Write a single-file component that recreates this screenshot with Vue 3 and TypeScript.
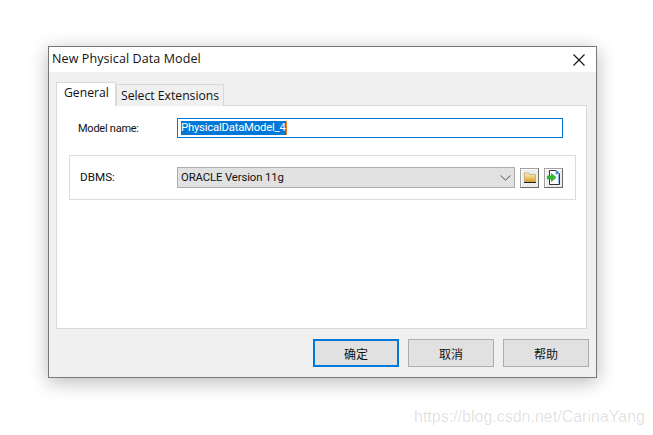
<script setup lang="ts">
const modelName = "PhysicalDataModel_4";
const buttons = ["确定", "取消", "帮助"];
</script>

<template>
  <div class="page">
    <div class="dialog">
      <header class="titlebar">
        <span class="title">New Physical Data Model</span>
        <svg class="close" width="12" height="12" viewBox="0 0 12 12">
          <path d="M0.5 0.5L11.5 11.5M11.5 0.5L0.5 11.5" stroke="#111" stroke-width="1.1" fill="none" />
        </svg>
      </header>
      <div class="body">
        <div class="tabs">
          <div class="tab active">General</div>
          <div class="tab">Select Extensions</div>
        </div>
        <div class="panel">
          <div class="name-row">
            <span class="name-label">Model name:</span>
            <div class="input"><span class="selected">{{ modelName }}</span></div>
          </div>
          <div class="group">
            <span class="dbms-label">DBMS:</span>
            <div class="select">
              <span>ORACLE Version 11g</span>
              <svg width="11" height="6" viewBox="0 0 11 6">
                <path d="M0.5 0.5L5.5 5L10.5 0.5" stroke="#555" stroke-width="1" fill="none" />
              </svg>
            </div>
            <button class="icon-btn">
              <svg width="12" height="11" viewBox="0 0 12 11">
                <defs>
                  <linearGradient id="fold" x1="0" y1="0" x2="0" y2="1">
                    <stop offset="0" stop-color="#fff3c4" />
                    <stop offset="1" stop-color="#d99f22" />
                  </linearGradient>
                </defs>
                <path d="M0.5 10V1H4.5L5.5 2.5H11.5V10Z" fill="url(#fold)" stroke="#b9a877" stroke-width="0.8" />
                <path d="M0 10.5H12" stroke="#222" stroke-width="1" />
              </svg>
            </button>
            <button class="icon-btn">
              <svg width="13" height="15" viewBox="0 0 13 15">
                <path d="M2.5 0.5H9L12.5 4V14.5H2.5Z" fill="#fff" stroke="#333" />
                <path d="M9 0.5V4H12.5Z" fill="#5f9fe8" stroke="#3b78c8" stroke-width="0.7" />
                <path d="M11.5 5V13.5" stroke="#8db8ea" />
                <path d="M0.5 6H4.5V3.5L9 7.5L4.5 11.5V9H0.5Z" fill="#2fbf2f" stroke="#1d8a1d" stroke-width="0.6" />
              </svg>
            </button>
          </div>
        </div>
        <div class="actions">
          <button
            v-for="(label, i) in buttons"
            :key="label"
            class="action"
            :class="{ primary: i === 0 }"
          >{{ label }}</button>
        </div>
      </div>
    </div>
    <span class="watermark">https://blog.csdn.net/CarinaYang</span>
  </div>
</template>

<style>
html, body { margin: 0; background: #fff; }
</style>

<style scoped>
.page {
  position: relative;
  width: 653px;
  height: 435px;
  overflow: hidden;
  padding: 46px 0 0 48px;
  box-sizing: border-box;
  background: #fff;
  font-family: "Liberation Sans", Arial, "Noto Sans CJK SC", sans-serif;
  color: #111;
}
.dialog {
  width: 549px;
  height: 332px;
  box-sizing: border-box;
  border: 1px solid #777;
  display: flex;
  flex-direction: column;
  box-shadow: 0 4px 18px rgba(0, 0, 0, 0.28);
}
.titlebar {
  height: 25px;
  flex: none;
  background: #fff;
  display: flex;
  align-items: center;
  justify-content: space-between;
  padding: 0 11px 2px 3px;
  box-sizing: border-box;
}
.title { font-family: "Open Sans", "Liberation Sans", sans-serif; font-size: 12.5px; letter-spacing: 0.1px; }
.close { flex: none; margin-top: 2px; }
.body {
  flex: 1;
  background: #f0f0f0;
  padding: 11px 9px 10px 7px;
  display: flex;
  flex-direction: column;
}
.tabs {
  display: flex;
  align-items: flex-end;
  height: 23px;
  flex: none;
  position: relative;
  z-index: 1;
  margin-bottom: -1px;
}
.tab {
  height: 22px;
  box-sizing: border-box;
  padding: 0 4px;
  width: 108px;
  border: 1px solid #d9d9d9;
  border-bottom: none;
  background: #f0f0f0;
  font-family: "Open Sans", "Liberation Sans", sans-serif;
  font-size: 12.2px;
  line-height: 21px;
  white-space: nowrap;
}
.tab.active {
  width: 60px;
  height: 24px;
  padding: 0 7px;
  background: #fff;
  line-height: 19px;
}
.panel {
  height: 224px;
  flex: none;
  background: #fff;
  border: 1px solid #d9d9d9;
  box-sizing: border-box;
  padding: 12px 10px 0 12px;
}
.name-row {
  display: flex;
  align-items: center;
  height: 20px;
}
.name-label {
  width: 108px;
  padding-left: 9px;
  box-sizing: border-box;
  font-family: Roboto, "Liberation Sans", sans-serif;
  font-size: 11px;
  letter-spacing: -0.25px;
}
.input {
  width: 386px;
  height: 20px;
  box-sizing: border-box;
  border: 1px solid #0078d7;
  padding: 2px 0 0 3px;
  font-family: Roboto, "Liberation Sans", sans-serif;
  font-size: 11.3px;
  letter-spacing: -0.2px;
  line-height: 14px;
  background: #fff;
}
.selected {
  background: #0078d7;
  color: #fff;
  display: inline-block;
  height: 14px;
  border-right: 1px solid #f08020;
}
.group {
  margin-top: 17px;
  height: 45px;
  width: 507px;
  box-sizing: border-box;
  border: 1px solid #dcdcdc;
  display: flex;
  align-items: center;
  padding-left: 10px;
}
.dbms-label {
  width: 97px;
  font-family: Roboto, "Liberation Sans", sans-serif;
  font-size: 11.7px;
  flex: none;
  margin-bottom: 2px;
}
.select {
  width: 338px;
  height: 21px;
  box-sizing: border-box;
  border: 1px solid #adadad;
  background: #e1e1e1;
  display: flex;
  align-items: center;
  justify-content: space-between;
  padding: 0 3px 0 3px;
  font-family: Roboto, "Liberation Sans", sans-serif;
  font-size: 11.3px;
  letter-spacing: -0.1px;
  flex: none;
}
.icon-btn {
  width: 19px;
  height: 20px;
  margin-left: 5px;
  padding: 0;
  flex: none;
  border: 1px solid #a0a0a0;
  border-right-color: #6a6a6a;
  border-bottom-color: #6a6a6a;
  box-shadow: inset 1px 1px 0 #fff;
  background: #ececec;
  display: flex;
  align-items: center;
  justify-content: center;
}
.actions {
  display: flex;
  justify-content: flex-end;
  gap: 9px;
  margin-top: 10px;
  margin-right: -2px;
}
.action {
  width: 86px;
  height: 28px;
  box-sizing: border-box;
  border: 1px solid #adadad;
  background: #e1e1e1;
  font-family: "Noto Sans CJK SC", sans-serif;
  font-size: 12px;
  color: #111;
  padding: 0;
}
.action.primary { border: 2px solid #0078d7; }
.watermark {
  position: absolute;
  left: 414px;
  top: 408px;
  font-size: 16px;
  color: rgba(0, 0, 0, 0.13);
  white-space: nowrap;
}
</style>
